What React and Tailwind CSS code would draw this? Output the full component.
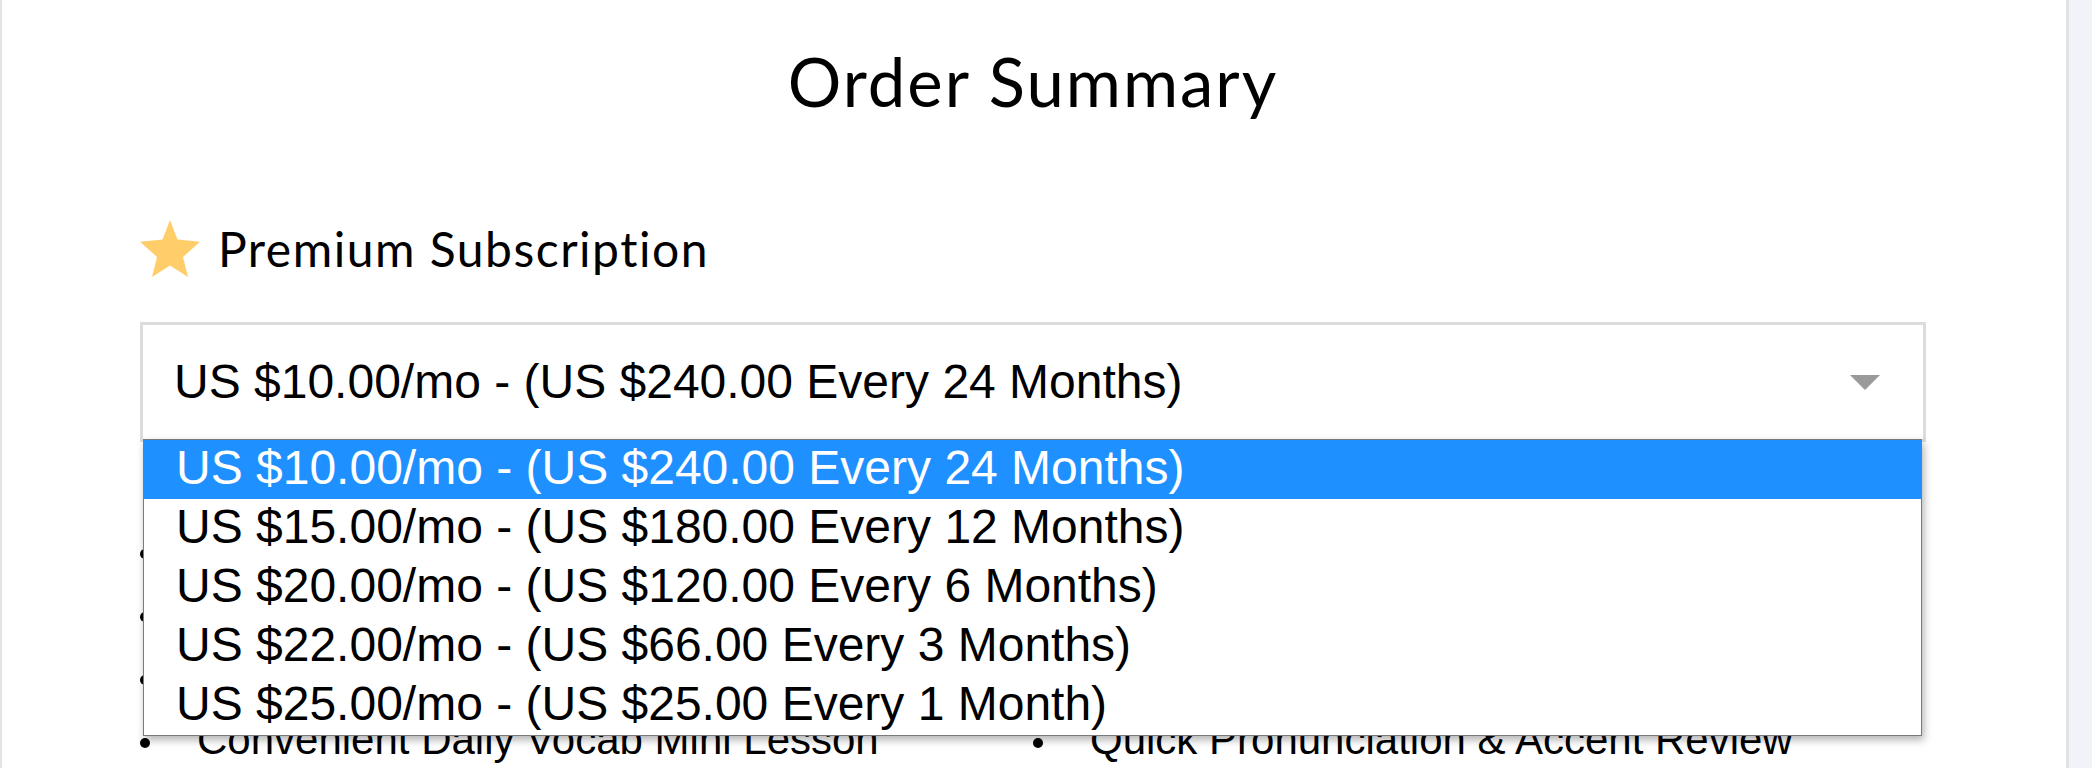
import React from "react";

const options = [
  "US $10.00/mo - (US $240.00 Every 24 Months)",
  "US $15.00/mo - (US $180.00 Every 12 Months)",
  "US $20.00/mo - (US $120.00 Every 6 Months)",
  "US $22.00/mo - (US $66.00 Every 3 Months)",
  "US $25.00/mo - (US $25.00 Every 1 Month)",
];

const leftItems = [
  "Unlimited Access to All Lessons",
  "Mobile & Desktop Learning Apps",
  "Downloadable Audio & Video",
  "Convenient Daily Vocab Mini Lesson",
];
const rightItems = [
  "Line-by-Line Lesson Transcripts",
  "Personal Word Bank & Flashcards",
  "Progress Tracking & Assessments",
  "Quick Pronunciation & Accent Review",
];

function Star() {
  return (
    <svg width="60" height="57" viewBox="0 0 60 57" className="shrink-0">
      <polygon
        points="30,0 37.5,19.5 60,21.7 43,37 48,57 30,45.5 12,57 17,37 0,21.7 22.5,19.5"
        fill="#ffcd69"
      />
    </svg>
  );
}

function ListItem({ text }) {
  return (
    <li className="flex items-start h-[63px] leading-[63px]">
      <span className="mt-[30px] w-[10px] h-[10px] rounded-full bg-black shrink-0" />
      <span className="ml-[47px] whitespace-nowrap">{text}</span>
    </li>
  );
}

export default function App() {
  return (
    <div className="w-[2092px] h-[768px] overflow-hidden bg-[#f2f3f8] flex">
      <div className="w-[2069px] h-full bg-white border-l-2 border-r-[3px] border-[#e3e3e3] shrink-0 flex flex-col pl-[138px]">
        <h1
          className="w-[1786px] text-center text-[67px] tracking-[2px] leading-none pt-[48px] font-normal text-black"
          style={{ fontFamily: "Lato, 'Open Sans', sans-serif" }}
        >
          Order Summary
        </h1>

        <div
          className="mt-[105px] flex items-center gap-[18px] text-[48px] tracking-[1.5px] leading-none text-black"
          style={{ fontFamily: "Lato, 'Open Sans', sans-serif" }}
        >
          <Star />
          <span>Premium Subscription</span>
        </div>

        <div
          className="relative mt-[45px] w-[1786px]"
          style={{ fontFamily: "'Liberation Sans', Arial, sans-serif" }}
        >
          <div className="h-[120px] border-[3px] border-[#dcdcdc] bg-white flex items-center justify-between pl-[31px] pr-[43px] text-[48px] leading-none text-black">
            <span className="whitespace-nowrap">{options[0]}</span>
            <svg width="30" height="15" viewBox="0 0 30 15">
              <polygon points="0,0 30,0 15,15" fill="#9a9a9a" />
            </svg>
          </div>

          <ul className="mt-[77px] grid grid-cols-2 text-[42px] text-black">
            <div>
              {leftItems.map((t) => (
                <ListItem key={t} text={t} />
              ))}
            </div>
            <div>
              {rightItems.map((t) => (
                <ListItem key={t} text={t} />
              ))}
            </div>
          </ul>

          <div className="absolute top-[117px] left-[3px] w-[1779px] z-10 bg-white border border-[#7a7a7a] shadow-[2px_4px_8px_rgba(0,0,0,0.3)] text-[48px]">
            {options.map((o, i) => (
              <div
                key={o}
                className={
                  "h-[59px] leading-[55px] pl-[32px] whitespace-nowrap " +
                  (i === 0 ? "bg-[#1e90ff] text-white" : "text-black")
                }
              >
                {o}
              </div>
            ))}
          </div>
        </div>
      </div>
    </div>
  );
}
